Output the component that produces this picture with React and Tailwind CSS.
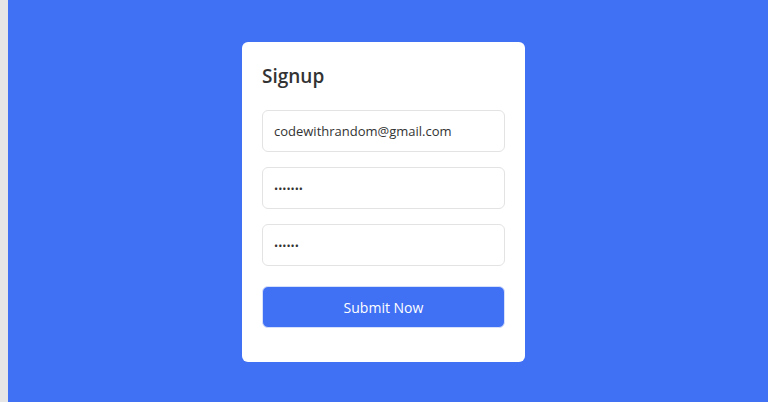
import React from 'react';

const App = () => {
  return (
    <div className="flex h-[402px] w-full overflow-hidden" style={{ fontFamily: '"Open Sans", "Noto Sans", sans-serif' }}>
      <div className="w-2 shrink-0 bg-[#e6e6e6]"></div>
      <div className="flex flex-1 items-center justify-center bg-[#4070f4] pt-[2px] pr-[9px]">
        <div className="w-[283px] rounded-md bg-white px-5 pt-[22px] pb-[34px]">
          <h2 className="text-[19px] font-semibold text-[#333] leading-[24px]">Signup</h2>
          <form className="mt-[22px] flex flex-col gap-[15px]" onSubmit={(e) => e.preventDefault()}>
            <input
              type="text"
              readOnly
              value="codewithrandom@gmail.com"
              className="h-[42px] w-full rounded-md border border-[#e3e3e3] px-[11px] text-[13px] text-[#333] outline-none"
            />
            <input
              type="password"
              readOnly
              value="1234567"
              className="h-[42px] w-full rounded-md border border-[#e3e3e3] px-[11px] text-[11px] text-[#333] outline-none"
            />
            <input
              type="password"
              readOnly
              value="123456"
              className="h-[42px] w-full rounded-md border border-[#e3e3e3] px-[11px] text-[11px] text-[#333] outline-none"
            />
            <button
              type="submit"
              className="mt-[5px] h-[42px] w-full rounded-md border border-[#d7e0fb] bg-[#4070f4] text-[14px] text-white"
            >
              Submit Now
            </button>
          </form>
        </div>
      </div>
    </div>
  );
};

export default App;
